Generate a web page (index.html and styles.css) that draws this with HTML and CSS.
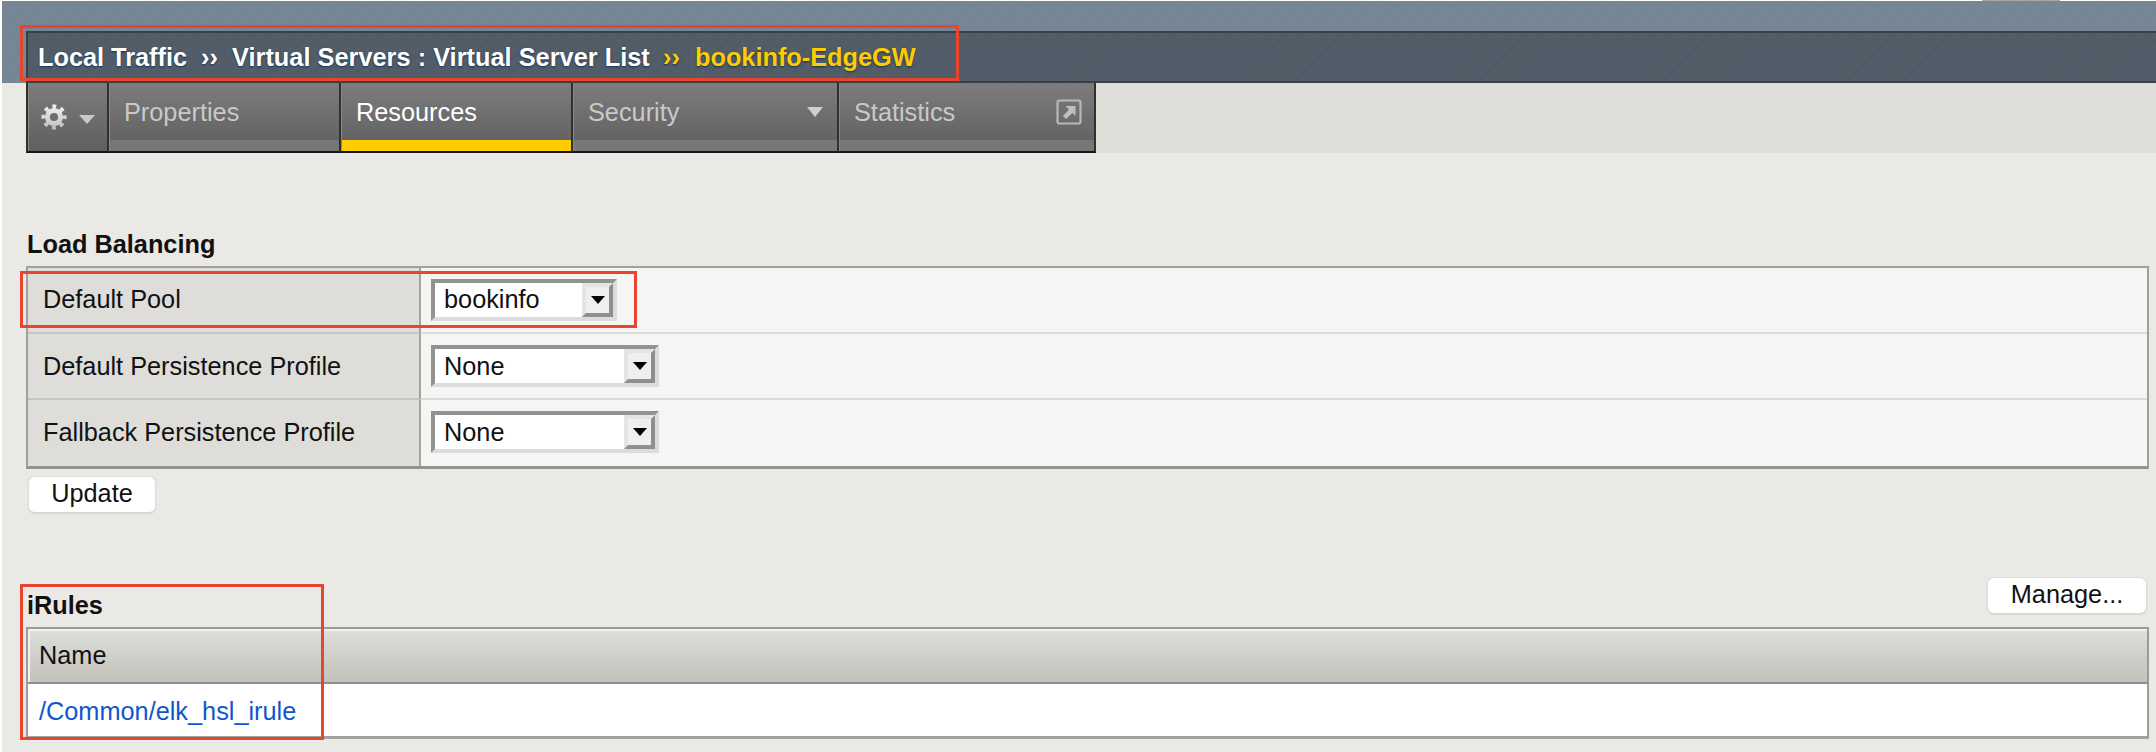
FILE: index.html
```html
<!DOCTYPE html>
<html lang="en">
<head>
<meta charset="utf-8">
<title>Virtual Server Resources</title>
<link rel="stylesheet" href="styles.css">
</head>
<body>
<div class="page">
  <header class="masthead">
    <span class="masthead-tab"></span>
    <div class="crumbs">
      <span class="c1">Local Traffic</span><span class="s1">››</span><span class="c2">Virtual Servers : Virtual Server List</span><span class="s2">››</span><span class="c3">bookinfo-EdgeGW</span>
    </div>
  </header>
  <nav class="tabs">
    <div class="tab gear">
      <svg width="56" height="28" viewBox="0 0 56 28">
        <defs><linearGradient id="g" x1="0" y1="0" x2="0" y2="26" gradientUnits="userSpaceOnUse"><stop offset="0" stop-color="#f4f4f4"/><stop offset="1" stop-color="#bdbdbd"/></linearGradient></defs>
        <g fill="none" stroke="url(#g)"><circle cx="14" cy="13" r="6.600" stroke-width="5"/><circle cx="14" cy="13" r="10.600" stroke-width="4" stroke-dasharray="3.900 4.425" stroke-dashoffset="1.950"/></g>
        <path d="M39 11h16l-8 9z" fill="#c8c8c8"/>
      </svg>
    </div>
    <div class="tab properties">Properties</div>
    <div class="tab resources active">Resources</div>
    <div class="tab security">Security<svg class="caret" width="16" height="10" viewBox="0 0 16 10"><path d="M0 0h16l-8 10z" fill="#d0d0d0"/></svg></div>
    <div class="tab statistics">Statistics<svg class="popout" width="26" height="26" viewBox="0 0 26 26"><rect x="1.500" y="1.500" width="23" height="23" rx="2" fill="none" stroke="#b8b8b8" stroke-width="2.200"/><path d="M9.500 7h10v10l-3-3-6.500 6-3-3 6-6.500z" fill="#c0c0c0"/></svg></div>
    <div class="rest"></div>
  </nav>
  <main>
    <h2 class="lb-title">Load Balancing</h2>
    <div class="settings">
      <div class="row"><div class="label">Default Pool</div><div class="value"><div class="select short"><span>bookinfo</span><i><svg width="14" height="8"><path d="M0 0h14l-7 8z"/></svg></i></div></div></div>
      <div class="row"><div class="label">Default Persistence Profile</div><div class="value"><div class="select"><span>None</span><i><svg width="14" height="8"><path d="M0 0h14l-7 8z"/></svg></i></div></div></div>
      <div class="row"><div class="label">Fallback Persistence Profile</div><div class="value"><div class="select"><span>None</span><i><svg width="14" height="8"><path d="M0 0h14l-7 8z"/></svg></i></div></div></div>
    </div>
    <div class="button update">Update</div>
    <div class="rules-head"><h2>iRules</h2><div class="button manage">Manage...</div></div>
    <div class="rules">
      <div class="th">Name</div>
      <div class="td"><a>/Common/elk_hsl_irule</a></div>
    </div>
  </main>
  <div class="mark mark-path"></div>
  <div class="mark mark-pool"></div>
  <div class="mark mark-rules"></div>
</div>
</body>
</html>
```
FILE: styles.css
```css
* { box-sizing: border-box; }
body { margin: 0; background: #fff; font: 25.3px/30px "Liberation Sans", Arial, sans-serif; color: #111; }
.page { position: relative; width: 2156px; height: 752px; padding: 1px 0 0 2px; overflow: hidden; }
.masthead { height: 82px; padding: 30px 0 0 24px; background: repeating-linear-gradient(135deg, #748595 0, #788796 5px, #748595 10px); }
.masthead-tab { position: absolute; left: 1982px; top: 0; width: 78px; height: 1px; background: #a9a8a5; }
.crumbs { height: 52px; border: 2px solid #3c4045; border-right: 0; padding: 9px 0 0 10px; background: repeating-linear-gradient(135deg, #505b67 0, #545e69 5px, #505b67 10px); display: flex; font-weight: bold; color: #fff; white-space: nowrap; text-shadow: 0 1px 2px #123450; }
.crumbs span { flex: none; }
.c1 { width: 163px; } .s1 { width: 31px; } .c2 { width: 431px; letter-spacing: 0.03px; } .s2 { width: 32px; }
.s2, .c3 { color: #fc0; }
.tabs { display: flex; height: 70px; padding-left: 24px; background: #eae9e5; }
.tab { position: relative; height: 70px; padding: 14px 0 0 15px; color: #c9c9c9; border-right: 2px solid #303030; border-bottom: 2px solid #161616; background: linear-gradient(#7d7d7d, #636363 57px, #777 57px); box-shadow: inset 1px 0 #888; }
.gear { width: 83px; padding: 21px 0 0 12px; border-left: 2px solid #303030; background: linear-gradient(#7d7d7d, #636363 57px, #626262); }
.gear svg { display: block; }
.properties { width: 232px; } .resources { width: 232px; } .security { width: 266px; } .statistics { width: 257px; }
.active { color: #fff; background: linear-gradient(#7d7d7d, #636363 57px, #fc0 57px); }
.caret { position: absolute; right: 14px; top: 24px; }
.popout { position: absolute; right: 12px; top: 16px; }
.rest { flex: 1; background: #dfded9; }
main { height: 599px; padding: 76px 7px 0 24px; background: #eae9e5; }
h2 { margin: 0; font-size: 25.3px; line-height: 30px; color: #111; }
.lb-title { height: 37px; padding-left: 1px; }
.settings { height: 203px; border: 2px solid #a0a0a0; border-bottom: 3px solid #929292; }
.row { display: flex; height: 66px; border-bottom: 2px solid #dcdbda; }
.row:last-child { border: 0; }
.row + .row .label { padding-top: 17px; }
.label { width: 393px; padding: 16px 0 0 15px; background: #deddd9; border-right: 2px solid #a3a3a3; }
.row:not(:last-child) .label { height: 66px; border-bottom: 2px solid #c6c5c1; }
.value { flex: 1; padding: 11px 0 0 10px; background: #f6f5f4; }
.select { width: 228px; height: 42px; display: flex; border: 4px solid; border-color: #929292 #dcdcdc #dcdcdc #929292; background: #fff; }
.short { width: 186px; }
.select span { flex: 1; padding: 2px 0 0 9px; }
.short span { padding-top: 1px; }
.select i { width: 31px; border: 4px solid; border-color: #e4e4e4 #8f8f8f #8f8f8f #e4e4e4; background: #efefef; display: grid; place-items: center; }
.button { height: 35px; background: #fff; border-radius: 6px; box-shadow: 0 0 1px 1px #dddcd9, 0 1px 2px #aaa; text-align: center; line-height: 33px; }
.update { width: 126px; margin: 8px 0 0 3px; }
.rules-head { display: flex; justify-content: space-between; margin-top: 66px; height: 49px; }
.rules-head h2 { margin-top: 12px; padding-left: 1px; }
.manage { width: 158px; margin-right: 3px; }
.rules { height: 112px; border: 2px solid #9b9b9b; border-bottom: 3px solid #a3a3a3; background: #fff; }
.th { height: 55px; padding: 11px 0 0 11px; border-bottom: 2px solid #8e8e8e; background: linear-gradient(#dfdfdb, #c2c1bb); box-shadow: inset 2px 2px #f1f1ef; }
.td { padding: 12px 0 0 11px; }
a { color: #1155cc; }
.mark { position: absolute; border: 3px solid #e8452c; }
.mark-path { left: 20px; top: 25px; width: 939px; height: 56px; }
.mark-pool { left: 20px; top: 271px; width: 617px; height: 57px; }
.mark-rules { left: 20px; top: 584px; width: 304px; height: 156px; }
```
